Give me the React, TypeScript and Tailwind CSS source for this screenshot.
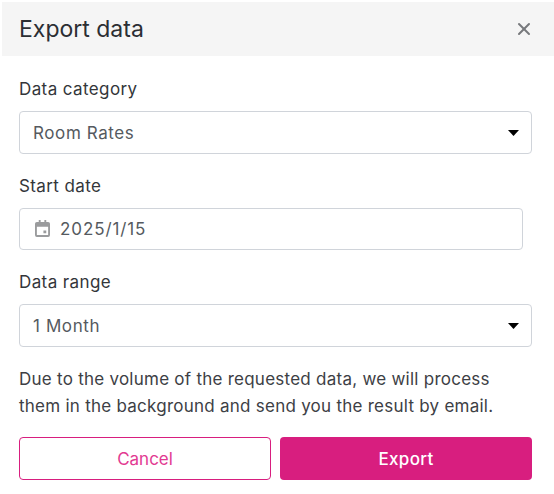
import { X } from "lucide-react";

function Caret() {
  return (
    <svg width="11" height="6" viewBox="0 0 11 6" className="shrink-0">
      <path d="M0 0h11L5.5 6z" fill="#000" />
    </svg>
  );
}

function SelectBox({ value }: { value: string }) {
  return (
    <div className="h-[43px] w-[513px] flex items-center justify-between pl-[13px] pr-[12px] bg-white border border-[#d0d4da] rounded-[4px]">
      <span className="pt-[2px] text-[17px] tracking-[0.6px] text-[#555a60]">{value}</span>
      <Caret />
    </div>
  );
}

export default function App() {
  return (
    <div className="w-[554px] h-[494px] bg-white pt-[2px] pl-[2px] font-['Inter','Noto_Sans',sans-serif] overflow-hidden">
      <div className="h-[54px] bg-[#f5f5f5] flex items-center justify-between pl-[17px] pr-[20px]">
        <h1 className="text-[23px] text-[#2b2e33]">Export data</h1>
        <X size={20} strokeWidth={2.4} className="text-[#77797c]" />
      </div>
      <div className="pl-[17px] pt-[21px] flex flex-col">
        <label className="text-[17px] tracking-[0.4px] leading-[24px] text-[#33363a] mb-[10px]">Data category</label>
        <SelectBox value="Room Rates" />
        <label className="text-[17px] tracking-[0.4px] leading-[24px] text-[#33363a] mt-[20px] mb-[10px]">Start date</label>
        <div className="h-[42px] w-[504px] flex items-center gap-[10px] pl-[15px] border border-[#d0d4da] rounded-[4px]">
          <svg width="15" height="17" viewBox="0 0 16 18" className="shrink-0 mb-[2px]">
            <path
              fill="#9a9b9d"
              d="M4 0h2v2h4V0h2v2h2a2 2 0 0 1 2 2v12a2 2 0 0 1-2 2H2a2 2 0 0 1-2-2V4a2 2 0 0 1 2-2h2zM2 7v9h12V7zm7 4h3v3H9z"
            />
          </svg>
          <span className="pt-[2px] text-[17px] tracking-[0.9px] text-[#555a60]">2025/1/15</span>
        </div>
        <label className="text-[17px] tracking-[0.4px] leading-[24px] text-[#33363a] mt-[20px] mb-[10px]">Data range</label>
        <SelectBox value="1 Month" />
        <p className="text-[17px] tracking-[0.25px] leading-[27px] text-[#3d4045] mt-[19px] w-[520px]">
          Due to the volume of the requested data, we will process
          <br />
          them in the background and send you the result by email.
        </p>
        <div className="flex gap-[9px] mt-[17px] w-[513px]">
          <button className="w-[252px] h-[43px] pt-[2px] bg-white border border-[#d81e7f] rounded-[4px] text-[17px] text-[#e23a92]">
            Cancel
          </button>
          <button className="w-[252px] h-[43px] pt-[2px] bg-[#d81e7f] rounded-[4px] text-[17px] tracking-[0.3px] font-medium text-white">
            Export
          </button>
        </div>
      </div>
    </div>
  );
}
